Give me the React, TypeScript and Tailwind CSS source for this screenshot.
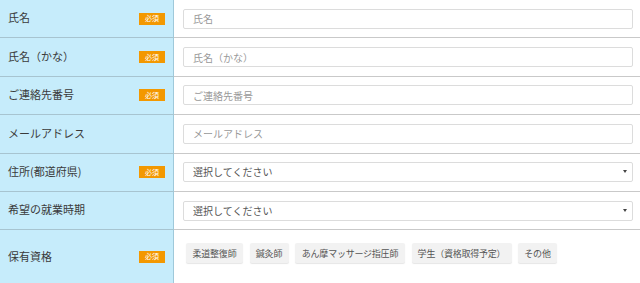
import type { ReactNode } from 'react';

const FONT = { fontFamily: '"Noto Sans CJK JP", "Noto Sans", sans-serif' };

function Badge() {
  return (
    <span className="flex h-[12px] w-[26px] items-center justify-center bg-[#f39800] text-[7px] leading-none text-white">
      必須
    </span>
  );
}

function Row({ label, required, children, last }: { label: string; required?: boolean; children: ReactNode; last?: boolean }) {
  return (
    <div className={`flex ${last ? 'h-[53px]' : 'h-[38.4px]'}`}>
      <div
        className={`flex w-[174px] shrink-0 items-center justify-between border-r border-r-[#9fc9da] bg-[#c6ecfb] pl-[8px] pr-[8px] ${
          last ? '' : 'border-b border-b-[#a7c4d0]'
        }`}
      >
        <span className="-mt-[2px] text-[11px] text-[#3a3a3a]">{label}</span>
        {required && <Badge />}
      </div>
      <div className={`flex flex-1 bg-white pl-[9px] pr-[7px] ${last ? 'items-start pt-[13px] pl-[12px]' : 'items-center border-b border-b-[#c9c9c9]'}`}>
        {children}
      </div>
    </div>
  );
}

function TextInput({ placeholder }: { placeholder: string }) {
  return (
    <input
      type="text"
      placeholder={placeholder}
      className="h-[20px] w-full rounded-[2px] border border-[#dcdcdc] bg-white px-[9px] text-[10px] text-[#333] placeholder:text-[#999] focus:outline-none"
    />
  );
}

function SelectBox() {
  return (
    <div className="relative flex h-[20px] w-full items-center rounded-[2px] border border-[#dcdcdc] bg-white">
      <select className="h-[18px] w-full appearance-none bg-transparent px-[9px] py-0 text-[10px] leading-[18px] text-[#555] focus:outline-none">
        <option>選択してください</option>
      </select>
      <span className="pointer-events-none absolute right-[5px] top-[7px] h-0 w-0 border-x-[2px] border-t-[3px] border-x-transparent border-t-[#444]" />
    </div>
  );
}

const QUALIFICATIONS = [
  { name: '柔道整復師', w: 'w-[57px]' },
  { name: '鍼灸師', w: 'w-[39px]' },
  { name: 'あん摩マッサージ指圧師', w: 'w-[110px]' },
  { name: '学生（資格取得予定）', w: 'w-[100px]' },
  { name: 'その他', w: 'w-[39px]' },
];

export default function App() {
  return (
    <div className="h-[283px] w-[640px] overflow-hidden bg-white" style={FONT}>
      <Row label="氏名" required>
        <TextInput placeholder="氏名" />
      </Row>
      <Row label="氏名（かな）" required>
        <TextInput placeholder="氏名（かな）" />
      </Row>
      <Row label="ご連絡先番号" required>
        <TextInput placeholder="ご連絡先番号" />
      </Row>
      <Row label="メールアドレス">
        <TextInput placeholder="メールアドレス" />
      </Row>
      <Row label="住所(都道府県)" required>
        <SelectBox />
      </Row>
      <Row label="希望の就業時期">
        <SelectBox />
      </Row>
      <Row label="保有資格" required last>
        <div className="flex gap-[6.5px]">
          {QUALIFICATIONS.map((q) => (
            <button
              key={q.name}
              className={`${q.w} h-[20px] whitespace-nowrap rounded-[2px] bg-[#f2f2f2] text-[9px] tracking-tight text-[#555] shadow-[0_1px_1px_rgba(0,0,0,0.1)]`}
            >
              {q.name}
            </button>
          ))}
        </div>
      </Row>
    </div>
  );
}
